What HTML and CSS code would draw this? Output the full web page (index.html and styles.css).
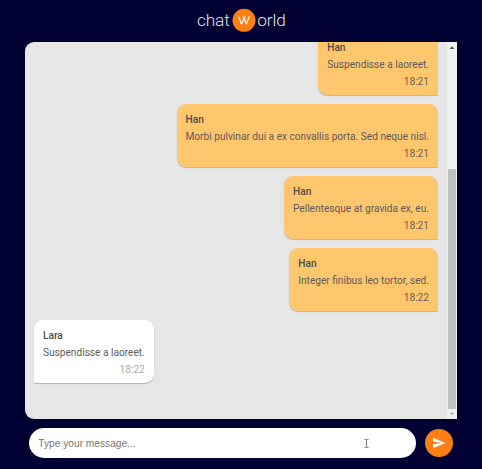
FILE: index.html
```html
<!DOCTYPE html>
<html lang="en">
<head>
<meta charset="utf-8">
<title>chatworld</title>
<link rel="stylesheet" href="styles.css">
</head>
<body>
<header class="logo">
  <span class="logo-left">chat</span>
  <svg class="logo-mark" viewBox="0 0 24 24"><circle cx="12" cy="12.3" r="11.5" fill="#fd7e14"/><path d="M6.8 9.2 9.4 16 12.1 10.6 14.4 16 17.2 8.6" fill="none" stroke="#fff" stroke-width="1.2" stroke-linecap="round" stroke-linejoin="round"/><circle cx="12.1" cy="9.3" r="1.2" fill="none" stroke="#fff" stroke-width=".9"/></svg>
  <span>orld</span>
</header>
<main class="panel">
  <section class="messages">
    <article class="bubble own"><strong>Han</strong><p>Suspendisse a laoreet.</p><time>18:21</time></article>
    <article class="bubble own"><strong>Han</strong><p>Morbi pulvinar dui a ex convallis porta. Sed neque nisl.</p><time>18:21</time></article>
    <article class="bubble own"><strong>Han</strong><p>Pellentesque at gravida ex, eu.</p><time>18:21</time></article>
    <article class="bubble own"><strong>Han</strong><p>Integer finibus leo tortor, sed.</p><time>18:22</time></article>
    <article class="bubble"><strong>Lara</strong><p>Suspendisse a laoreet.</p><time>18:22</time></article>
  </section>
  <div class="scrollbar">
    <svg class="arrow" viewBox="0 0 10 10"><path d="M2.5 7 5 4.3 7.5 7z" fill="#505050"/></svg>
    <div class="thumb"></div>
    <svg class="arrow" viewBox="0 0 10 10"><path d="M2.5 3.5 5 6.2 7.5 3.5z" fill="#b3b3b3"/></svg>
  </div>
</main>
<form class="composer">
  <div class="field">
    <input type="text" placeholder="Type your message..." aria-label="Message">
    <svg class="caret" viewBox="0 0 5 9"><path d="M.5.5h1.3l.7.4.7-.4h1.3M2.5.9v7.2M.5 8.5h1.3l.7-.4.7.4h1.3" fill="none" stroke="#666" stroke-width=".9"/></svg>
  </div>
  <button class="send" type="button" aria-label="Send"><svg viewBox="0 0 24 24"><path d="M2.01 21 23 12 2.01 3 2 10l15 2-15 2z" fill="#fff"/></svg></button>
</form>
</body>
</html>
```
FILE: styles.css
```css
* { box-sizing: border-box; }
body {
  margin: 0;
  height: 469px;
  overflow: hidden;
  background: #000033;
  font-family: Roboto, sans-serif;
  font-size: 10.15px;
}
.logo {
  height: 42px;
  display: flex;
  align-items: center;
  padding: 0 0 2px 197px;
  color: #e6e6e6;
  font-size: 17.3px;
  font-weight: 300;
}
.logo > span { letter-spacing: -.15px; }
.logo-left { width: 34.5px; }
.logo-mark { width: 24px; height: 24px; margin-right: 1.7px; }
.panel {
  width: 432.4px;
  height: 377.4px;
  margin-left: 25px;
  display: flex;
  overflow: hidden;
  background: #e6e6e6;
  border-radius: 9px 0 0 9px;
}
.messages {
  flex: 1;
  display: flex;
  flex-direction: column;
  justify-content: flex-end;
  align-items: flex-start;
  gap: 9px;
  padding: 0 9px 36px;
}
.bubble {
  flex: none;
  height: 63px;
  display: flex;
  flex-direction: column;
  padding: 8px 9px 0;
  line-height: 16.6px;
  color: #625a58;
  background: #fff;
  border-radius: 9px 9px 9px 0;
  box-shadow: 0 1px 1px rgba(0, 0, 0, .22);
}
.bubble strong { font-weight: 500; color: #504a49; }
.bubble p { margin: 0; }
.bubble time { align-self: flex-end; color: #aaa; }
.own { align-self: flex-end; background: #fec66d; border-radius: 9px 9px 0 9px; }
.own time { color: #735f50; }
.scrollbar {
  width: 10.4px;
  display: flex;
  flex-direction: column;
  background: #f0f1f1;
}
.arrow { width: 10px; height: 10px; }
.thumb { height: 240px; margin: 117px 1px 0; background: #c1c1c1; }
.composer { display: flex; align-items: center; padding: 8.6px 0 0 29.3px; gap: 9px; }
.field {
  width: 386.5px;
  height: 30px;
  display: flex;
  align-items: center;
  padding: 1px 47px 0 9px;
  background: #fff;
  border-radius: 15px;
}
.field input {
  flex: 1;
  min-width: 0;
  padding: 0;
  border: 0;
  outline: 0;
  background: transparent;
  font: 10.2px "Liberation Sans", sans-serif;
}
.field input::placeholder { color: #757575; }
.caret { width: 5px; height: 9px; }
.send {
  width: 28px;
  height: 28px;
  display: flex;
  align-items: center;
  justify-content: center;
  padding: 0;
  border: 0;
  border-radius: 50%;
  background: #fd7e14;
}
.send svg { width: 14px; height: 14px; }
```
